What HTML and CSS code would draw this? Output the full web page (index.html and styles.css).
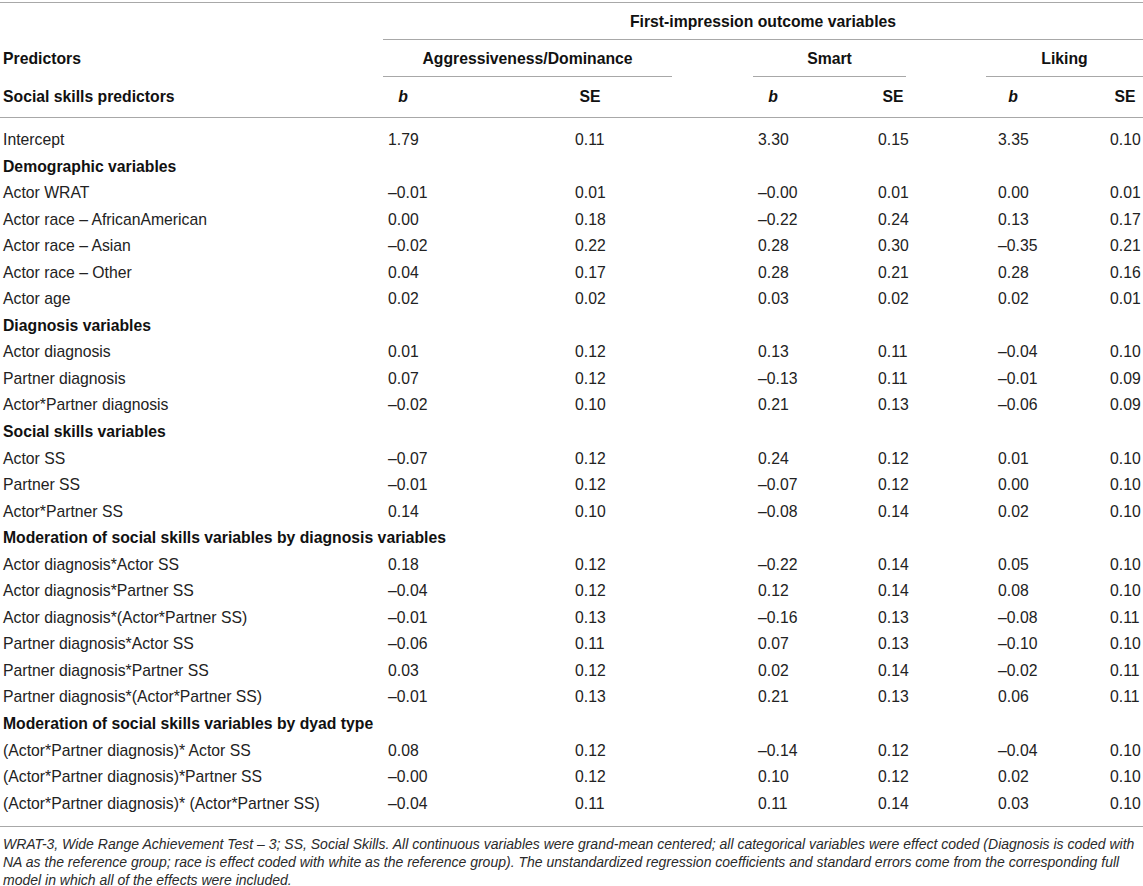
FILE: index.html
```html
<!DOCTYPE html>
<html lang="en">
<head>
<meta charset="utf-8">
<title>First-impression outcome variables</title>
<link rel="stylesheet" href="styles.css">
</head>
<body>
<div class="table">
  <div class="thead">
    <div class="hrow r1">
      <span class="cell"></span>
      <span class="cell grp-all">First-impression outcome variables</span>
    </div>
    <div class="hrow r2">
      <span class="cell lab">Predictors</span>
      <span class="cell grp g-aggr">Aggressiveness/Dominance</span>
      <span class="cell grp g-smart">Smart</span>
      <span class="cell grp g-like">Liking</span>
    </div>
    <div class="hrow r3 row">
      <span class="cell lab">Social skills predictors</span>
      <span class="cell"><i class="hl">b</i></span>
      <span class="cell"><b class="hl">SE</b></span>
      <span class="cell"><i class="hl">b</i></span>
      <span class="cell"><b class="hl">SE</b></span>
      <span class="cell"><i class="hl">b</i></span>
      <span class="cell"><b class="hl">SE</b></span>
    </div>
  </div>
  <div class="tbody">
    <div class="row"><span>Intercept</span><span>1.79</span><span>0.11</span><span>3.30</span><span>0.15</span><span>3.35</span><span>0.10</span></div>
    <div class="sec">Demographic variables</div>
    <div class="row"><span>Actor WRAT</span><span>&ndash;0.01</span><span>0.01</span><span>&ndash;0.00</span><span>0.01</span><span>0.00</span><span>0.01</span></div>
    <div class="row"><span>Actor race &ndash; AfricanAmerican</span><span>0.00</span><span>0.18</span><span>&ndash;0.22</span><span>0.24</span><span>0.13</span><span>0.17</span></div>
    <div class="row"><span>Actor race &ndash; Asian</span><span>&ndash;0.02</span><span>0.22</span><span>0.28</span><span>0.30</span><span>&ndash;0.35</span><span>0.21</span></div>
    <div class="row"><span>Actor race &ndash; Other</span><span>0.04</span><span>0.17</span><span>0.28</span><span>0.21</span><span>0.28</span><span>0.16</span></div>
    <div class="row"><span>Actor age</span><span>0.02</span><span>0.02</span><span>0.03</span><span>0.02</span><span>0.02</span><span>0.01</span></div>
    <div class="sec">Diagnosis variables</div>
    <div class="row"><span>Actor diagnosis</span><span>0.01</span><span>0.12</span><span>0.13</span><span>0.11</span><span>&ndash;0.04</span><span>0.10</span></div>
    <div class="row"><span>Partner diagnosis</span><span>0.07</span><span>0.12</span><span>&ndash;0.13</span><span>0.11</span><span>&ndash;0.01</span><span>0.09</span></div>
    <div class="row"><span>Actor*Partner diagnosis</span><span>&ndash;0.02</span><span>0.10</span><span>0.21</span><span>0.13</span><span>&ndash;0.06</span><span>0.09</span></div>
    <div class="sec">Social skills variables</div>
    <div class="row"><span>Actor SS</span><span>&ndash;0.07</span><span>0.12</span><span>0.24</span><span>0.12</span><span>0.01</span><span>0.10</span></div>
    <div class="row"><span>Partner SS</span><span>&ndash;0.01</span><span>0.12</span><span>&ndash;0.07</span><span>0.12</span><span>0.00</span><span>0.10</span></div>
    <div class="row"><span>Actor*Partner SS</span><span>0.14</span><span>0.10</span><span>&ndash;0.08</span><span>0.14</span><span>0.02</span><span>0.10</span></div>
    <div class="sec">Moderation of social skills variables by diagnosis variables</div>
    <div class="row"><span>Actor diagnosis*Actor SS</span><span>0.18</span><span>0.12</span><span>&ndash;0.22</span><span>0.14</span><span>0.05</span><span>0.10</span></div>
    <div class="row"><span>Actor diagnosis*Partner SS</span><span>&ndash;0.04</span><span>0.12</span><span>0.12</span><span>0.14</span><span>0.08</span><span>0.10</span></div>
    <div class="row"><span>Actor diagnosis*(Actor*Partner SS)</span><span>&ndash;0.01</span><span>0.13</span><span>&ndash;0.16</span><span>0.13</span><span>&ndash;0.08</span><span>0.11</span></div>
    <div class="row"><span>Partner diagnosis*Actor SS</span><span>&ndash;0.06</span><span>0.11</span><span>0.07</span><span>0.13</span><span>&ndash;0.10</span><span>0.10</span></div>
    <div class="row"><span>Partner diagnosis*Partner SS</span><span>0.03</span><span>0.12</span><span>0.02</span><span>0.14</span><span>&ndash;0.02</span><span>0.11</span></div>
    <div class="row"><span>Partner diagnosis*(Actor*Partner SS)</span><span>&ndash;0.01</span><span>0.13</span><span>0.21</span><span>0.13</span><span>0.06</span><span>0.11</span></div>
    <div class="sec">Moderation of social skills variables by dyad type</div>
    <div class="row"><span>(Actor*Partner diagnosis)* Actor SS</span><span>0.08</span><span>0.12</span><span>&ndash;0.14</span><span>0.12</span><span>&ndash;0.04</span><span>0.10</span></div>
    <div class="row"><span>(Actor*Partner diagnosis)*Partner SS</span><span>&ndash;0.00</span><span>0.12</span><span>0.10</span><span>0.12</span><span>0.02</span><span>0.10</span></div>
    <div class="row"><span>(Actor*Partner diagnosis)* (Actor*Partner SS)</span><span>&ndash;0.04</span><span>0.11</span><span>0.11</span><span>0.14</span><span>0.03</span><span>0.10</span></div>
  </div>
  <p class="note">WRAT-3, Wide Range Achievement Test &ndash; 3; SS, Social Skills. All continuous variables were grand-mean centered; all categorical variables were effect coded (Diagnosis is coded with<br>NA as the reference group; race is effect coded with white as the reference group). The unstandardized regression coefficients and standard errors come from the corresponding full<br>model in which all of the effects were included.</p>
</div>
</body>
</html>
```
FILE: styles.css
```css
html, body {
  margin: 0;
  padding: 0;
  background: #fff;
}

body {
  font-family: "Liberation Sans", Arial, Helvetica, sans-serif;
  font-size: 15.75px;
  color: #222;
}

.table {
  width: 1143px;
  margin-top: 2px;
  border-top: 1px solid #a8a8a8;
}

.hrow,
.row {
  display: grid;
  grid-template-columns: 383px 187px 183px 120px 113px 119px 38px;
}

.thead .cell {
  font-weight: bold;
  color: #111;
}

/* Row 1: spanning group title */
.r1 .cell {
  line-height: 34px;
  padding-top: 2px;
}

.grp-all {
  grid-column: 2 / 8;
  text-align: center;
  border-bottom: 1px solid #a8a8a8;
}

/* Row 2: group titles with their own rules */
.r2 .cell {
  line-height: 34px;
  padding-top: 2px;
}

.grp {
  text-align: center;
  border-bottom: 1px solid #a8a8a8;
}

.g-aggr {
  grid-column: 2 / 4;
  margin-right: 81px;
}

.g-smart {
  grid-column: 4 / 6;
  margin-right: 80px;
}

.g-like {
  grid-column: 6 / 8;
}

.lab {
  padding-left: 3px;
}

/* Row 3: b / SE labels */
.r3 {
  border-bottom: 1px solid #a8a8a8;
  line-height: 40px;
}

.hl {
  display: inline-block;
  width: 30px;
  text-align: center;
  font-weight: bold;
}

.tbody {
  padding: 9px 0 9px;
  border-bottom: 1px solid #a8a8a8;
}

.row > span,
.r3 > .cell {
  padding-left: 5px;
  white-space: nowrap;
}

.row > span:first-child,
.r3 > .cell:first-child {
  padding-left: 3px;
}

.row > span:nth-child(6),
.r3 > .cell:nth-child(6) {
  padding-left: 12px;
}

.tbody .row {
  line-height: 26.56px;
  height: 26.56px;
}

.sec {
  font-weight: bold;
  color: #111;
  padding-left: 3px;
  line-height: 26.56px;
  height: 26.56px;
}

.note {
  margin: 0;
  padding: 8px 0 0 3px;
  font-style: italic;
  font-size: 14px;
  line-height: 18px;
  color: #2a2a2a;
  white-space: nowrap;
}
```
